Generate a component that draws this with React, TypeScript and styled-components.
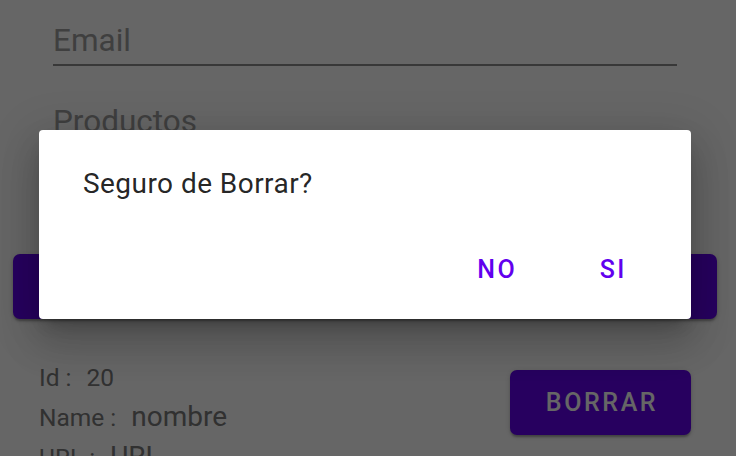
import React from "react";
import styled, { createGlobalStyle } from "styled-components";

const Global = createGlobalStyle`
  html, body { margin: 0; padding: 0; background: #ffffff; }
  body { font-family: Roboto, "Noto Sans", "Liberation Sans", sans-serif; }
  * { box-sizing: border-box; }
`;

const Screen = styled.div`
  position: relative;
  width: 736px;
  height: 456px;
  overflow: hidden;
  background: #ffffff;
`;

const Form = styled.div`
  display: flex;
  flex-direction: column;
  padding: 22px 59px 0 53px;
`;

const Field = styled.div<{ $gap?: number }>`
  margin-top: ${(p) => p.$gap ?? 0}px;
  padding-bottom: 5px;
  border-bottom: 2px solid #8c8c8c;
  font-size: 31.5px;
  line-height: 37px;
  color: #9e9e9e;
`;

const WideButton = styled.div`
  margin: 107px 19px 0 13px;
  height: 65px;
  border-radius: 7px;
  background: #6200ee;
  box-shadow: 0 3px 2px -1px rgba(0, 0, 0, 0.2), 0 2px 3px 0 rgba(0, 0, 0, 0.14),
    0 1px 6px 0 rgba(0, 0, 0, 0.12);
`;

const Item = styled.div`
  display: flex;
  justify-content: space-between;
  align-items: flex-start;
  padding: 44px 45px 0 39px;
`;

const Details = styled.div`
  display: flex;
  flex-direction: column;
  gap: 10px;
`;

const DetailRow = styled.div`
  display: flex;
  align-items: baseline;
  gap: 15px;
  color: #7a7a7a;
  line-height: 29px;
`;

const Label = styled.span`
  font-size: 24.5px;
`;

const Value = styled.span<{ $big?: boolean }>`
  font-size: ${(p) => (p.$big ? 28 : 24.5)}px;
`;

const DeleteButton = styled.div`
  margin-top: 7px;
  width: 181px;
  height: 65px;
  border-radius: 7px;
  background: #6200ee;
  color: #ffffff;
  display: flex;
  align-items: center;
  justify-content: center;
  font-size: 25px;
  font-weight: 500;
  letter-spacing: 2.6px;
  padding-left: 3px;
  box-shadow: 0 3px 2px -1px rgba(0, 0, 0, 0.2), 0 2px 3px 0 rgba(0, 0, 0, 0.14),
    0 1px 6px 0 rgba(0, 0, 0, 0.12);
`;

const Scrim = styled.div`
  position: absolute;
  inset: 0;
  background: rgba(0, 0, 0, 0.6);
  display: flex;
  align-items: flex-start;
  padding: 130px 0 0 39px;
`;

const Dialog = styled.div`
  width: 652px;
  height: 189px;
  background: #ffffff;
  border-radius: 4px;
  display: flex;
  flex-direction: column;
  padding: 37px 23px 0 44px;
  box-shadow: 0 11px 15px -7px rgba(0, 0, 0, 0.2), 0 24px 38px 3px rgba(0, 0, 0, 0.14),
    0 9px 46px 8px rgba(0, 0, 0, 0.12);
`;

const Message = styled.div`
  font-size: 28px;
  letter-spacing: 0.45px;
  color: rgba(0, 0, 0, 0.87);
`;

const Actions = styled.div`
  display: flex;
  justify-content: flex-end;
  gap: 4px;
  margin-top: 38px;
`;

const TextButton = styled.div`
  min-width: 112px;
  height: 63px;
  display: flex;
  align-items: center;
  justify-content: center;
  padding-left: 2.5px;
  font-size: 25px;
  font-weight: 500;
  letter-spacing: 2.5px;
  color: #6200ee;
`;

export default function App() {
  return (
    <>
      <Global />
      <Screen>
        <Form>
          <Field>Email</Field>
          <Field $gap={37}>Productos</Field>
        </Form>
        <WideButton />
        <Item>
          <Details>
            <DetailRow>
              <Label>Id :</Label>
              <Value>20</Value>
            </DetailRow>
            <DetailRow>
              <Label>Name :</Label>
              <Value $big>nombre</Value>
            </DetailRow>
            <DetailRow>
              <Label>URL :</Label>
              <Value $big>URL</Value>
            </DetailRow>
          </Details>
          <DeleteButton>BORRAR</DeleteButton>
        </Item>
        <Scrim>
          <Dialog>
            <Message>Seguro de Borrar?</Message>
            <Actions>
              <TextButton>NO</TextButton>
              <TextButton>SI</TextButton>
            </Actions>
          </Dialog>
        </Scrim>
      </Screen>
    </>
  );
}
